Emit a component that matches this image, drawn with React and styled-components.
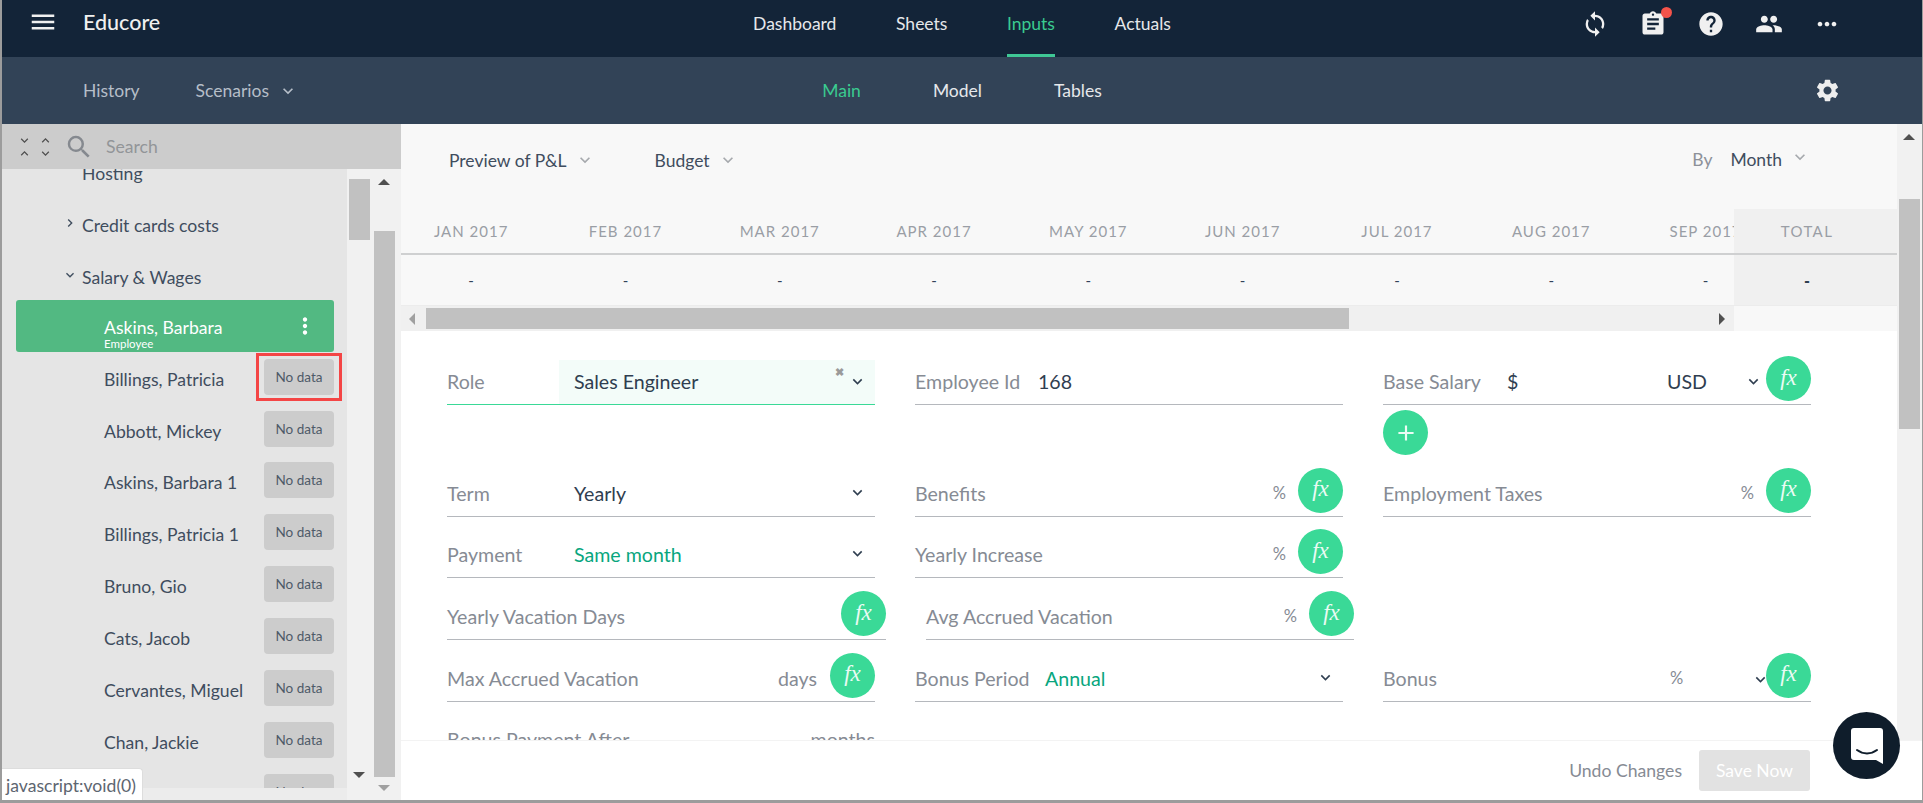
import React from 'react';
import styled, { createGlobalStyle } from 'styled-components';
import {
  MdMenu,
  MdSync,
  MdAssignment,
  MdHelp,
  MdPeople,
  MdMoreHoriz,
  MdSettings,
  MdKeyboardArrowDown,
  MdKeyboardArrowRight,
  MdKeyboardArrowUp,
  MdSearch,
  MdMoreVert,
  MdAdd,
} from 'react-icons/md';

const GlobalStyle = createGlobalStyle`
  html, body { margin: 0; padding: 0; height: 100%; overflow: hidden; }
  body { font-family: Lato, "Open Sans", sans-serif; font-size: 17px; color: #2f3e50; }
  * { box-sizing: border-box; }
`;

const Page = styled.div`
  width: 1923px;
  height: 803px;
  overflow: hidden;
  display: flex;
  flex-direction: column;
  background: #fff;
  border-left: 2px solid #9c9c9c;
  border-right: 1px solid #9c9c9c;
  border-bottom: 3px solid #9c9c9c;
  position: relative;
`;

const NavBar = styled.header`
  height: ${props => props.$height}px;
  flex: none;
  display: grid;
  grid-template-columns: 1fr auto 1fr;
  align-items: center;
  background: ${props => props.$bg};
  color: #e6e8eb;
`;

const NavLeft = styled.div`
  display: flex;
  align-items: center;
  margin-top: -13px;
`;

const MenuButton = styled.div`
  width: 81px;
  padding-left: 26px;
  display: flex;
  font-size: 30px;
  color: #f0f0f0;
`;

const Brand = styled.div`
  font-size: 21.5px;
  font-weight: 500;
  color: #f0f0f0;
`;

const Tabs = styled.nav`
  display: flex;
  height: 100%;
  gap: ${props => props.$gap}px;
`;

const Tab = styled.a`
  position: relative;
  display: flex;
  align-items: center;
  font-size: 17.5px;
  padding-bottom: ${props => props.$lift}px;
  color: ${props => (props.$active ? '#3acb90' : '#e6e8eb')};

  &::after {
    content: ${props => (props.$underline ? '""' : 'none')};
    position: absolute;
    left: 0;
    right: 0;
    bottom: 0;
    height: 3px;
    background: #3fc795;
  }
`;

const NavIcons = styled.div`
  display: flex;
  justify-content: flex-end;
  align-items: center;
  gap: 30px;
  padding-right: 81px;
  margin-top: -10px;
  font-size: 28px;
  color: #f0f0f0;
`;

const IconSlot = styled.div`
  position: relative;
  width: 28px;
  height: 28px;
  display: flex;
`;

const RedDot = styled.span`
  position: absolute;
  top: -3px;
  right: -5px;
  width: 11px;
  height: 11px;
  border-radius: 50%;
  background: #f4534a;
`;

const SubLeft = styled.div`
  display: flex;
  align-items: center;
  padding-left: 81px;
  gap: 56px;
  color: #b6bec8;
`;

const SubItem = styled.span`
  display: flex;
  align-items: center;
  gap: 9px;
  font-size: 17.5px;
  color: #b6bec8;
`;

const GearWrap = styled.div`
  display: flex;
  justify-content: flex-end;
  padding-right: 81px;
  font-size: 27px;
  color: #eeeeee;
`;

const Body = styled.div`
  flex: 1;
  display: flex;
  min-height: 0;
`;

const Sidebar = styled.aside`
  width: 399px;
  flex: none;
  display: flex;
  flex-direction: column;
  background: #f1f1f1;
`;

const SearchBar = styled.div`
  height: 45px;
  flex: none;
  background: #cccccc;
  display: flex;
  align-items: center;
  padding-left: 13px;
`;

const ExpandIcons = styled.div`
  display: flex;
  gap: 3px;
  color: #4f4f4f;
`;

const ChevronStack = styled.div`
  width: 18px;
  height: 26px;
  display: flex;
  flex-direction: column;
  align-items: center;
  font-size: 15px;
  line-height: 0;

  svg { margin: -1px 0; }
`;

const SearchIcon = styled.div`
  display: flex;
  margin-left: 10px;
  font-size: 30px;
  color: #85898f;
`;

const SearchText = styled.span`
  margin-left: 12px;
  font-size: 17.6px;
  color: #929598;
`;

const SidebarBody = styled.div`
  flex: 1;
  display: flex;
  min-height: 0;
`;

const ListColumn = styled.div`
  width: 345px;
  flex: none;
  display: flex;
  flex-direction: column;
  background: #ececec;
`;

const ListClip = styled.div`
  height: 619px;
  flex: none;
  overflow: hidden;
  background: #e5e5e5;
`;

const ListInner = styled.div`
  margin-top: -21px;
  padding-left: 14px;
  width: 332px;
`;

const GroupRow = styled.div`
  height: 51.9px;
  display: flex;
  align-items: center;
  padding-left: 66px;
  font-size: 17.6px;
  color: #3f4d5e;
  position: relative;

  svg {
    position: absolute;
    left: 46px;
    top: 15px;
    font-size: 16px;
  }
`;

const SelectedRow = styled.div`
  height: 52px;
  margin-top: -4px;
  margin-bottom: 2px;
  border-radius: 3px;
  background: #52b982;
  color: #fff;
  padding: 18px 16px 0 88px;
  position: relative;
  line-height: 1;
`;

const SelectedName = styled.div`
  font-size: 17.6px;
  line-height: 20px;
`;

const SelectedSub = styled.div`
  font-size: 11.5px;
  line-height: 11px;
`;

const DotsIcon = styled.div`
  position: absolute;
  right: 16px;
  top: 13px;
  display: flex;
  font-size: 26px;
`;

const EmployeeRow = styled.div`
  height: 51.9px;
  display: flex;
  justify-content: space-between;
`;

const EmployeeName = styled.span`
  padding-left: ${props => props.$indent}px;
  line-height: 52px;
  font-size: 17.6px;
  color: #3f4d5e;
`;

const NoData = styled.div`
  position: relative;
  width: 70px;
  height: 36px;
  margin-top: 5px;
  border-radius: 4px;
  background: #cccccc;
  color: #4e5a68;
  font-size: 13.5px;
  line-height: 36px;
  text-align: center;
`;

const Highlight = styled.span`
  position: absolute;
  inset: -6px -8px;
  border: 3px solid #f44545;
`;

const ScrollLane = styled.div`
  width: ${props => props.$width}px;
  flex: none;
  position: relative;
  background: ${props => props.$bg || 'transparent'};
`;

const Thumb = styled.div`
  width: 21px;
  height: ${props => props.$height}px;
  margin-top: ${props => props.$top}px;
  margin-left: ${props => props.$left}px;
  background: #c1c1c1;
`;

const Arrow = styled.i`
  position: absolute;
  width: 0;
  height: 0;
  left: ${props => props.$x}px;
  top: ${props => props.$y}px;
  border-left: 6px solid transparent;
  border-right: 6px solid transparent;
  border-bottom: ${props => (props.$down ? 'none' : `6px solid ${props.$color || '#505050'}`)};
  border-top: ${props => (props.$down ? `6px solid ${props.$color || '#505050'}` : 'none')};
`;

const Main = styled.main`
  flex: 1;
  min-width: 0;
  display: flex;
  flex-direction: column;
`;

const MainTop = styled.div`
  flex: 1;
  min-height: 0;
  display: flex;
`;

const MainContent = styled.div`
  flex: 1;
  min-width: 0;
  display: flex;
  flex-direction: column;
`;

const FilterBar = styled.div`
  height: 85px;
  flex: none;
  background: #f8f8f8;
  display: flex;
  align-items: flex-start;
  padding: 25px 0 0 48px;
  gap: 60px;
`;

const Filter = styled.div`
  display: flex;
  align-items: center;
  gap: 8px;
  font-size: 17.5px;
  color: #3f4d5e;
  line-height: 24px;

  svg {
    font-size: 20px;
    color: #a6a9ad;
    margin-top: -3px;
  }
`;

const ByLabel = styled.span`
  color: #8d9199;
  margin-right: 18px;
`;

const FilterRight = styled(Filter)`
  margin-left: auto;
  margin-right: 87px;
  gap: 0;
  margin-top: -1px;

  svg { margin: -6px 0 0 8px; }
`;

const TableBlock = styled.div`
  flex: none;
  display: flex;
  background: #f8f8f8;
`;

const MonthScroller = styled.div`
  flex: 1;
  min-width: 0;
  overflow: hidden;
`;

const MonthRow = styled.div`
  display: flex;
  margin-left: -7px;
  height: ${props => props.$height}px;
  align-items: center;
  width: 1700px;
`;

const HeadLine = styled.div`
  height: 46px;
  border-bottom: 2px solid #cfd0d1;
`;

const MonthCell = styled.div`
  width: 154.3px;
  flex: none;
  text-align: center;
  white-space: nowrap;
  font-size: 15px;
  letter-spacing: ${props => (props.$head ? '1px' : '0')};
  color: ${props => (props.$head ? '#9a9ea5' : '#33435a')};
`;

const TotalColumn = styled.div`
  width: 163px;
  flex: none;
  background: #f0f0f0;
`;

const TotalHead = styled.div`
  height: 46px;
  border-bottom: 2px solid #cfd0d1;
  display: flex;
  align-items: center;
  justify-content: center;
  padding-right: 17px;
  font-size: 15px;
  letter-spacing: 1.4px;
  color: #9a9ea5;
`;

const TotalValue = styled.div`
  height: 50px;
  display: flex;
  align-items: center;
  justify-content: center;
  padding-right: 17px;
  font-size: 16px;
  font-weight: 900;
  color: #2f3e50;
`;

const HScrollRow = styled.div`
  height: 26px;
  flex: none;
  display: flex;
  background: #f8f8f8;
  border-top: 1px solid #ececec;
`;

const HScrollTrack = styled.div`
  flex: 1;
  position: relative;
  background: #f0f0f0;
  padding: 2px 0 0 25px;
`;

const HScrollThumb = styled.div`
  width: 923px;
  height: 21px;
  background: #c1c1c1;
`;

const SideArrow = styled.i`
  position: absolute;
  top: 7px;
  left: ${props => props.$x}px;
  width: 0;
  height: 0;
  border-top: 6px solid transparent;
  border-bottom: 6px solid transparent;
  border-left: ${props => (props.$right ? '6px solid #505050' : 'none')};
  border-right: ${props => (props.$right ? 'none' : '6px solid #a0a0a0')};
`;

const HScrollCorner = styled.div`
  width: 163px;
  flex: none;
`;

const Form = styled.div`
  flex: 1;
  min-height: 0;
  overflow: hidden;
  padding: 22px 0 0 46px;
  background: #fff;
`;

const FormRow = styled.div`
  display: grid;
  grid-template-columns: ${props => (props.$wide ? '439px 428px' : '428px 428px 428px')};
  column-gap: 40px;
  margin-top: ${props => (props.$first ? 0 : 9.7)}px;
`;

const PlusRow = styled.div`
  margin: 5px 0 6px 936px;
`;

const Field = styled.div`
  height: 52px;
  display: flex;
  align-items: flex-end;
  font-size: 19.6px;
  border-bottom: 1.5px solid ${props => (props.$focus ? '#3ad997' : '#b5b8bd')};
`;

const Label = styled.span`
  flex: none;
  width: ${props => (props.$w ? `${props.$w}px` : 'auto')};
  line-height: 45px;
  color: #868b94;
  white-space: nowrap;
`;

const Value = styled.span`
  line-height: 45px;
  white-space: nowrap;
  color: ${props => (props.$green ? '#08a67e' : '#2f3e50')};
`;

const CurrencyValue = styled(Value)`
  margin-left: auto;
  width: 77px;
`;

const SelectBox = styled.div`
  flex: 1;
  height: 44px;
  display: flex;
  align-items: flex-end;
  background: #f3fcf9;
  padding-left: 15px;
`;

const Clear = styled.span`
  margin-left: auto;
  margin-right: 4px;
  align-self: flex-start;
  margin-top: 4px;
  font-size: 11px;
  font-weight: 900;
  line-height: 16px;
  color: #9a9a9a;
`;

const Chevron = styled.span`
  display: flex;
  flex: none;
  margin-left: ${props => (props.$auto ? 'auto' : '0')};
  margin-right: ${props => props.$mr ?? 0}px;
  margin-bottom: ${props => props.$mb ?? 14}px;
  font-size: 19px;
  color: #2f3e50;
`;

const Unit = styled.span`
  margin-left: auto;
  margin-right: ${props => props.$mr ?? 12}px;
  width: ${props => (props.$w ? `${props.$w}px` : 'auto')};
  font-size: ${props => (props.$small ? '16.5px' : 'inherit')};
  line-height: 45px;
  color: #868b94;
  white-space: nowrap;
`;

const CircleButton = styled.div`
  width: 45px;
  height: 45px;
  flex: none;
  border-radius: 50%;
  background: #3ad997;
  color: #eafbf4;
  display: flex;
  align-items: center;
  justify-content: center;
`;

const FxButton = styled(CircleButton)`
  margin-bottom: 3px;
  margin-left: ${props => (props.$auto ? 'auto' : '0')};
  font-family: "Liberation Serif", serif;
  font-style: italic;
  font-size: 23px;
  padding-bottom: 2px;
`;

const PlusButton = styled(CircleButton)`
  font-size: 26px;
`;

const BottomBar = styled.div`
  height: 60px;
  flex: none;
  display: flex;
  align-items: center;
  justify-content: flex-end;
  gap: 17px;
  padding: 0 112px 0 0;
  background: #fff;
  border-top: 1px solid #f3f3f3;
`;

const UndoLink = styled.span`
  font-size: 17.6px;
  color: #868b94;
`;

const SaveButton = styled.div`
  width: 111px;
  height: 41px;
  border-radius: 3px;
  background: #e2e2e2;
  color: #fff;
  font-size: 17.5px;
  line-height: 41px;
  text-align: center;
`;

const VScroll = styled.div`
  width: 25px;
  flex: none;
  position: relative;
  background: #f1f1f1;
`;

const ChatBubble = styled.div`
  position: absolute;
  right: 22px;
  bottom: 21px;
  width: 67px;
  height: 67px;
  border-radius: 50%;
  background: #0f1d2b;
  display: flex;
  align-items: center;
  justify-content: center;
`;

const StatusTip = styled.div`
  position: absolute;
  left: 0;
  bottom: 0;
  width: 141px;
  height: 32px;
  padding-left: 4px;
  background: #fff;
  border: 1px solid #dddddd;
  border-left: none;
  border-bottom: none;
  border-top-right-radius: 4px;
  font-size: 17.6px;
  line-height: 33px;
  color: #5d6570;
  white-space: nowrap;
`;

const months = ['JAN 2017', 'FEB 2017', 'MAR 2017', 'APR 2017', 'MAY 2017', 'JUN 2017', 'JUL 2017', 'AUG 2017', 'SEP 2017'];

const employees = [
  'Billings, Patricia',
  'Abbott, Mickey',
  'Askins, Barbara 1',
  'Billings, Patricia 1',
  'Bruno, Gio',
  'Cats, Jacob',
  'Cervantes, Miguel',
  'Chan, Jackie',
];

const Fx = ({ auto }) => <FxButton $auto={auto}>fx</FxButton>;

const ChatIcon = () => (
  <svg width="34" height="38" viewBox="0 0 34 38">
    <path d="M4 1h26a3 3 0 0 1 3 3v33l-7-4H4a3 3 0 0 1-3-3V4a3 3 0 0 1 3-3z" fill="#fff" />
    <path d="M7 23c6 4.5 14 4.5 20 0" fill="none" stroke="#0f1d2b" strokeWidth="2" strokeLinecap="round" />
  </svg>
);

export default function App() {
  return (
    <Page>
      <GlobalStyle />
      <NavBar $height={57} $bg="#132438">
        <NavLeft>
          <MenuButton><MdMenu /></MenuButton>
          <Brand>Educore</Brand>
        </NavLeft>
        <Tabs $gap={59.6}>
          <Tab $lift={10}>Dashboard</Tab>
          <Tab $lift={10}>Sheets</Tab>
          <Tab $lift={10} $active $underline>Inputs</Tab>
          <Tab $lift={10}>Actuals</Tab>
        </Tabs>
        <NavIcons>
          <IconSlot><MdSync size={28} /></IconSlot>
          <IconSlot><MdAssignment size={28} /><RedDot /></IconSlot>
          <IconSlot><MdHelp size={28} /></IconSlot>
          <IconSlot><MdPeople size={28} /></IconSlot>
          <IconSlot><MdMoreHoriz size={28} /></IconSlot>
        </NavIcons>
      </NavBar>
      <NavBar $height={67} $bg="#324357">
        <SubLeft>
          <SubItem>History</SubItem>
          <SubItem>Scenarios <MdKeyboardArrowDown size={20} /></SubItem>
        </SubLeft>
        <Tabs $gap={72}>
          <Tab $lift={0} $active>Main</Tab>
          <Tab $lift={0}>Model</Tab>
          <Tab $lift={0}>Tables</Tab>
        </Tabs>
        <GearWrap><MdSettings /></GearWrap>
      </NavBar>
      <Body>
        <Sidebar>
          <SearchBar>
            <ExpandIcons>
              <ChevronStack><MdKeyboardArrowDown /><MdKeyboardArrowUp /></ChevronStack>
              <ChevronStack><MdKeyboardArrowUp /><MdKeyboardArrowDown /></ChevronStack>
            </ExpandIcons>
            <SearchIcon><MdSearch /></SearchIcon>
            <SearchText>Search</SearchText>
          </SearchBar>
          <SidebarBody>
            <ListColumn>
              <ListClip>
                <ListInner>
                  <GroupRow>Hosting</GroupRow>
                  <GroupRow><MdKeyboardArrowRight />Credit cards costs</GroupRow>
                  <GroupRow><MdKeyboardArrowDown />Salary &amp; Wages</GroupRow>
                  <SelectedRow>
                    <SelectedName>Askins, Barbara</SelectedName>
                    <SelectedSub>Employee</SelectedSub>
                    <DotsIcon><MdMoreVert /></DotsIcon>
                  </SelectedRow>
                  {employees.map((name, i) => (
                    <EmployeeRow key={name}>
                      <EmployeeName $indent={88}>{name}</EmployeeName>
                      <NoData>No data{i === 0 && <Highlight />}</NoData>
                    </EmployeeRow>
                  ))}
                  <EmployeeRow>
                    <EmployeeName $indent={155}>-</EmployeeName>
                    <NoData>No data</NoData>
                  </EmployeeRow>
                </ListInner>
              </ListClip>
            </ListColumn>
            <ScrollLane $width={27} $bg="#f1f1f1">
              <Thumb $top={10} $height={61} $left={2} />
              <Arrow $x={6} $y={603} $down />
            </ScrollLane>
            <ScrollLane $width={27}>
              <Thumb $top={62} $height={546} $left={0} />
              <Arrow $x={4} $y={10} />
              <Arrow $x={4} $y={616} $down $color="#a0a0a0" />
            </ScrollLane>
          </SidebarBody>
        </Sidebar>
        <Main>
          <MainTop>
            <MainContent>
              <FilterBar>
                <Filter>Preview of P&amp;L <MdKeyboardArrowDown /></Filter>
                <Filter>Budget <MdKeyboardArrowDown /></Filter>
                <FilterRight><ByLabel>By</ByLabel>Month <MdKeyboardArrowDown /></FilterRight>
              </FilterBar>
              <TableBlock>
                <MonthScroller>
                  <HeadLine>
                    <MonthRow $height={44}>
                      {months.map(m => <MonthCell key={m} $head>{m}</MonthCell>)}
                    </MonthRow>
                  </HeadLine>
                  <MonthRow $height={50}>
                    {months.map(m => <MonthCell key={m}>-</MonthCell>)}
                  </MonthRow>
                </MonthScroller>
                <TotalColumn>
                  <TotalHead>TOTAL</TotalHead>
                  <TotalValue>-</TotalValue>
                </TotalColumn>
              </TableBlock>
              <HScrollRow>
                <HScrollTrack>
                  <SideArrow $x={8} />
                  <HScrollThumb />
                  <SideArrow $x={1318} $right />
                </HScrollTrack>
                <HScrollCorner />
              </HScrollRow>
              <Form>
                <FormRow $first>
                  <Field $focus>
                    <Label $w={112}>Role</Label>
                    <SelectBox>
                      <Value>Sales Engineer</Value>
                      <Clear>✖</Clear>
                      <Chevron $mr={8} $mb={13}><MdKeyboardArrowDown /></Chevron>
                    </SelectBox>
                  </Field>
                  <Field>
                    <Label $w={123}>Employee Id</Label>
                    <Value>168</Value>
                  </Field>
                  <Field>
                    <Label $w={124}>Base Salary</Label>
                    <Value>$</Value>
                    <CurrencyValue>USD</CurrencyValue>
                    <Chevron $mr={3} $mb={13}><MdKeyboardArrowDown /></Chevron>
                    <Fx />
                  </Field>
                </FormRow>
                <PlusRow><PlusButton><MdAdd /></PlusButton></PlusRow>
                <FormRow>
                  <Field>
                    <Label $w={127}>Term</Label>
                    <Value>Yearly</Value>
                    <Chevron $auto $mr={8}><MdKeyboardArrowDown /></Chevron>
                  </Field>
                  <Field>
                    <Label>Benefits</Label>
                    <Unit $small>%</Unit>
                    <Fx />
                  </Field>
                  <Field>
                    <Label>Employment Taxes</Label>
                    <Unit $small>%</Unit>
                    <Fx />
                  </Field>
                </FormRow>
                <FormRow>
                  <Field>
                    <Label $w={127}>Payment</Label>
                    <Value $green>Same month</Value>
                    <Chevron $auto $mr={8}><MdKeyboardArrowDown /></Chevron>
                  </Field>
                  <Field>
                    <Label>Yearly Increase</Label>
                    <Unit $small>%</Unit>
                    <Fx />
                  </Field>
                </FormRow>
                <FormRow $wide>
                  <Field>
                    <Label>Yearly Vacation Days</Label>
                    <Fx auto />
                  </Field>
                  <Field>
                    <Label>Avg Accrued Vacation</Label>
                    <Unit $small>%</Unit>
                    <Fx />
                  </Field>
                </FormRow>
                <FormRow>
                  <Field>
                    <Label>Max Accrued Vacation</Label>
                    <Unit $mr={13}>days</Unit>
                    <Fx />
                  </Field>
                  <Field>
                    <Label $w={130}>Bonus Period</Label>
                    <Value $green>Annual</Value>
                    <Chevron $auto $mr={8}><MdKeyboardArrowDown /></Chevron>
                  </Field>
                  <Field>
                    <Label>Bonus</Label>
                    <Unit $small $mr={0} $w={81}>%</Unit>
                    <Chevron $mb={12} $mr={-4}><MdKeyboardArrowDown /></Chevron>
                    <Fx />
                  </Field>
                </FormRow>
                <FormRow>
                  <Field>
                    <Label>Bonus Payment After</Label>
                    <Unit $mr={0}>months</Unit>
                  </Field>
                </FormRow>
              </Form>
            </MainContent>
            <VScroll>
              <Arrow $x={6} $y={10} />
              <Thumb $top={75} $height={230} $left={2} />
            </VScroll>
          </MainTop>
          <BottomBar>
            <UndoLink>Undo Changes</UndoLink>
            <SaveButton>Save Now</SaveButton>
          </BottomBar>
        </Main>
      </Body>
      <ChatBubble><ChatIcon /></ChatBubble>
      <StatusTip>javascript:void(0)</StatusTip>
    </Page>
  );
}
